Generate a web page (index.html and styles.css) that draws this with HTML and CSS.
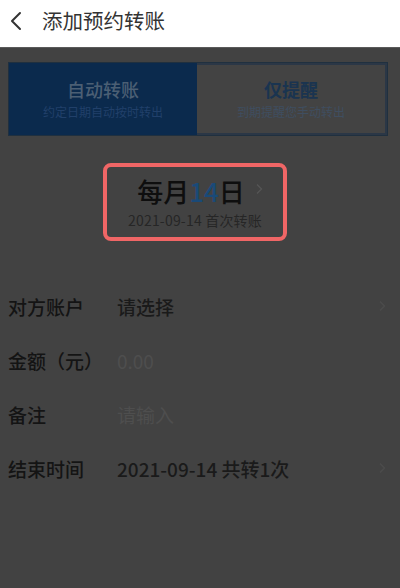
FILE: index.html
```html
<!DOCTYPE html>
<html lang="zh">
<head>
<meta charset="utf-8">
<link rel="stylesheet" href="styles.css">
</head>
<body>
<header class="topbar">
  <svg class="back" width="14" height="20" viewBox="0 0 14 20"><path d="M11 2 L3 10 L11 18" fill="none" stroke="#333" stroke-width="2" stroke-linecap="round" stroke-linejoin="round"/></svg>
  <span class="title">添加预约转账</span>
</header>
<main class="page">
  <div class="tabs">
    <div class="tab tab-on">
      <div class="tab-title">自动转账</div>
      <div class="tab-sub">约定日期自动按时转出</div>
    </div>
    <div class="tab tab-off">
      <div class="tab-title">仅提醒</div>
      <div class="tab-sub">到期提醒您手动转出</div>
    </div>
  </div>
  <div class="datebox">
    <div class="date-main">每月<span class="num">14</span>日<svg class="date-arrow" width="8" height="12" viewBox="0 0 8 12"><path d="M2 1.5 L6.5 6 L2 10.5" fill="none" stroke="#555" stroke-width="1.3"/></svg></div>
    <div class="date-sub">2021-09-14 首次转账</div>
  </div>
  <div class="rows">
    <div class="row"><span class="label">对方账户</span><span class="value">请选择</span><svg class="arrow" width="8" height="12" viewBox="0 0 8 12"><path d="M2 1.5 L6.5 6 L2 10.5" fill="none" stroke="#4c4c4c" stroke-width="1.4"/></svg></div>
    <div class="row"><span class="label">金额（元）</span><span class="value ph">0.00</span></div>
    <div class="row"><span class="label">备注</span><span class="value ph">请输入</span></div>
    <div class="row"><span class="label">结束时间</span><span class="value">2021-09-14 共转1次</span><svg class="arrow" width="8" height="12" viewBox="0 0 8 12"><path d="M2 1.5 L6.5 6 L2 10.5" fill="none" stroke="#4c4c4c" stroke-width="1.4"/></svg></div>
  </div>
</main>
</body>
</html>
```
FILE: styles.css
```css
html, body {
  margin: 0;
  padding: 0;
  background: #424242;
  font-family: "Noto Sans CJK SC", "Noto Sans", sans-serif;
}
.topbar {
  height: 47px;
  background: #fff;
  display: flex;
  align-items: center;
  border-bottom: 1px solid #5a5a5a;
}
.back {
  margin-left: 9px;
  margin-top: -6px;
}
.title {
  margin-left: 19px;
  margin-top: -7px;
  font-size: 20.5px;
  color: #333;
}
.page {
  display: flex;
  flex-direction: column;
}
.tabs {
  margin: 14px 12px 0 8px;
  height: 72px;
  display: flex;
  border: 1px solid #20303f;
}
.tab {
  flex: 1;
  display: flex;
  flex-direction: column;
  align-items: center;
  justify-content: center;
}
.tab-on {
  background: #0b2a4d;
}
.tab-off {
  background: #434343;
  border: 2px solid #2b3746;
  border-left: none;
}
.tab-title {
  font-size: 18px;
  font-weight: 500;
  line-height: 24px;
}
.tab-on .tab-title { color: #4b5f74; }
.tab-off .tab-title { color: #1a3450; font-weight: bold; }
.tab-sub {
  font-size: 12px;
  line-height: 18px;
  margin-top: 2px;
}
.tab-on .tab-sub { color: #21406a; }
.tab-off .tab-sub { color: #3f4e60; }
.datebox {
  margin: 27px 0 0 103px;
  width: 176px;
  height: 70px;
  border: 4px solid #f06666;
  border-radius: 8px;
  display: flex;
  flex-direction: column;
  align-items: center;
}
.date-main {
  font-size: 26px;
  font-weight: 500;
  line-height: 34px;
  margin-top: 7px;
  color: #0e0e0e;
  display: flex;
  align-items: center;
  padding-left: 10px;
}
.num {
  color: #1a4a78;
}
.date-arrow {
  margin-left: 10px;
  margin-top: -4px;
}
.date-sub {
  font-size: 14px;
  line-height: 18px;
  margin-top: 3px;
  color: #262626;
  letter-spacing: 0.2px;
}
.rows {
  margin-top: 38px;
  display: flex;
  flex-direction: column;
}
.row {
  height: 54px;
  display: flex;
  align-items: center;
  padding: 0 14px 0 8px;
}
.label {
  width: 109px;
  font-size: 19px;
  font-weight: 500;
  color: #141414;
}
.value {
  flex: 1;
  font-size: 19px;
  font-weight: 500;
  color: #1a1a1a;
}
.value.ph {
  color: #4e4e4e;
  font-weight: normal;
}
.arrow {
  flex: none;
}
```
